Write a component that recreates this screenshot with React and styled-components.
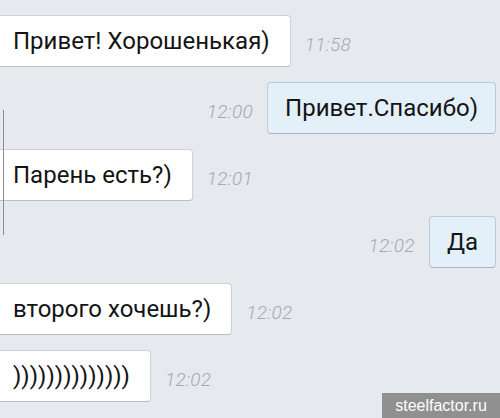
import React from "react";
import styled, { createGlobalStyle } from "styled-components";

const Global = createGlobalStyle`
  html, body { margin: 0; padding: 0; }
  body { font-family: Roboto, "Noto Sans", sans-serif; background: #e6e9ed; }
`;

const Screen = styled.div`
  position: relative;
  width: 500px;
  height: 418px;
  overflow: hidden;
  background: #e6e9ed;
  box-sizing: border-box;
  padding-top: 15px;
  display: flex;
  flex-direction: column;
  gap: 15px;
`;

const Row = styled.div`
  display: flex;
  align-items: center;
  gap: 14px;
  justify-content: ${(p) => (p.$out ? "flex-end" : "flex-start")};
  padding-right: ${(p) => (p.$out ? "4px" : "0")};
`;

const Bubble = styled.div`
  height: 52px;
  box-sizing: border-box;
  display: flex;
  align-items: center;
  font-family: Roboto, "Noto Sans", sans-serif;
  font-size: 24px;
  color: #141414;
  white-space: nowrap;
  background: ${(p) => (p.$out ? "#e3f0fa" : "#ffffff")};
  border: 1px solid ${(p) => (p.$out ? "#bfcad4" : "#cdd1d6")};
  border-bottom-color: ${(p) => (p.$out ? "#aab6c1" : "#b9bec4")};
  border-radius: ${(p) => (p.$out ? "4px" : "0 4px 4px 0")};
  border-left-width: ${(p) => (p.$out ? "1px" : "0")};
  padding: 0 ${(p) => (p.$out ? "17px" : "20px")} 1px ${(p) => (p.$out ? "17px" : "13px")};
`;

const Time = styled.span`
  font-family: Roboto, "Noto Sans", sans-serif;
  font-style: italic;
  font-weight: 300;
  font-size: 19px;
  color: #a3a9b1;
  letter-spacing: 0.3px;
  padding-top: 6px;
`;

const ScrollMark = styled.div`
  position: absolute;
  left: 3px;
  top: 110px;
  width: 1px;
  height: 125px;
  background: #8a8d91;
`;

const Watermark = styled.div`
  position: absolute;
  right: 0;
  bottom: 0;
  width: 118px;
  height: 25px;
  background: #8f908f;
  color: #ffffff;
  font-family: "Liberation Sans", Arial, sans-serif;
  font-size: 16px;
  display: flex;
  align-items: center;
  justify-content: center;
`;

const messages = [
  { text: "Привет! Хорошенькая)", time: "11:58", out: false },
  { text: "Привет.Спасибо)", time: "12:00", out: true },
  { text: "Парень есть?)", time: "12:01", out: false },
  { text: "Да", time: "12:02", out: true },
  { text: "второго хочешь?)", time: "12:02", out: false },
  { text: "))))))))))))))", time: "12:02", out: false },
];

export default function App() {
  return (
    <>
      <Global />
      <Screen>
        {messages.map((m, i) =>
          m.out ? (
            <Row key={i} $out>
              <Time>{m.time}</Time>
              <Bubble $out>{m.text}</Bubble>
            </Row>
          ) : (
            <Row key={i}>
              <Bubble>{m.text}</Bubble>
              <Time>{m.time}</Time>
            </Row>
          )
        )}
        <ScrollMark />
        <Watermark>steelfactor.ru</Watermark>
      </Screen>
    </>
  );
}
